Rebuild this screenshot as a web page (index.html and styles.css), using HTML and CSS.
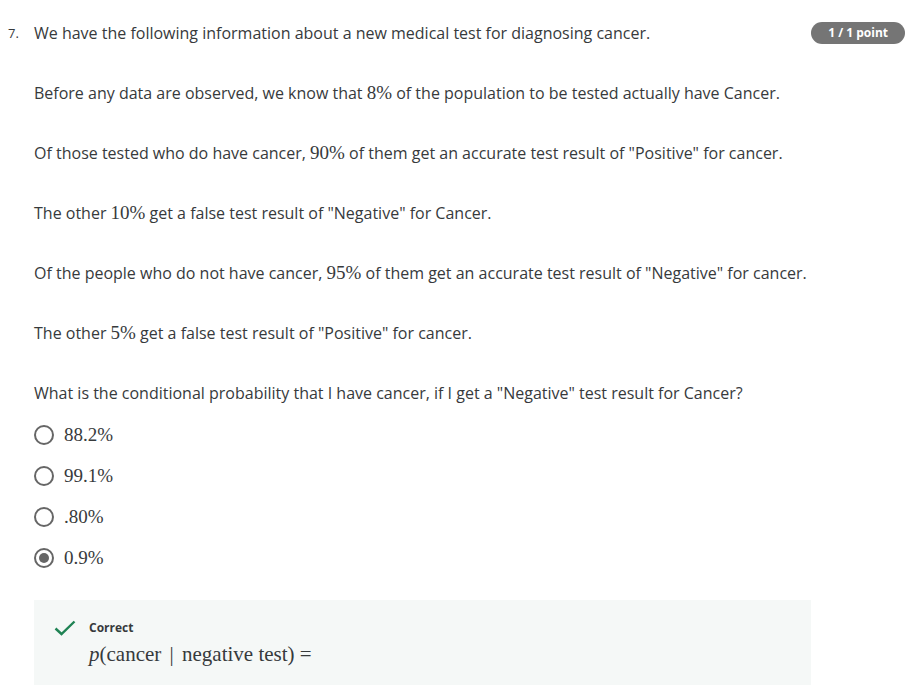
FILE: index.html
```html
<!DOCTYPE html>
<html>
<head>
<meta charset="utf-8">
<link rel="stylesheet" href="styles.css">
</head>
<body>
<div class="question">
  <div class="num">7.</div>
  <div class="content">
    <div class="head">
      <p class="first">We have the following information about a new medical test for diagnosing cancer.</p>
      <span class="badge">1 / 1 point</span>
    </div>
    <p>Before any data are observed, we know that <span class="m">8%</span> of the population to be tested actually have Cancer.</p>
    <p>Of those tested who do have cancer, <span class="m">90%</span> of them get an accurate test result of "Positive" for cancer.</p>
    <p>The other <span class="m">10%</span> get a false test result of "Negative" for Cancer.</p>
    <p>Of the people who do not have cancer, <span class="m">95%</span> of them get an accurate test result of "Negative" for cancer.</p>
    <p>The other <span class="m">5%</span> get a false test result of "Positive" for cancer.</p>
    <p class="last">What is the conditional probability that I have cancer, if I get a "Negative" test result for Cancer?</p>
    <ul class="options">
      <li><span class="radio"></span><span class="m">88.2%</span></li>
      <li><span class="radio"></span><span class="m">99.1%</span></li>
      <li><span class="radio"></span><span class="m">.80%</span></li>
      <li><span class="radio on"></span><span class="m">0.9%</span></li>
    </ul>
    <div class="feedback">
      <svg class="check" width="22" height="16" viewBox="0 0 22 16"><path d="M1.5 8.5 L7.5 14 L20.5 1.5" fill="none" stroke="#1f8354" stroke-width="2.4"/></svg>
      <div class="fb-body">
        <div class="fb-title">Correct</div>
        <div class="formula"><span class="it">p</span>(cancer <span class="bar">|</span> negative test) =</div>
      </div>
    </div>
  </div>
</div>
</body>
</html>
```

FILE: styles.css
```css
html, body {
  margin: 0;
  padding: 0;
  background: #fff;
}
body {
  font-family: "Open Sans", "Noto Sans", sans-serif;
  color: #373a3c;
  font-size: 16px;
}
.question {
  display: flex;
  padding: 21px 0 0 8px;
}
.num {
  width: 26px;
  font-size: 13px;
  line-height: 24px;
}
.content {
  flex: 1;
}
.head {
  display: flex;
  justify-content: space-between;
  align-items: flex-start;
  padding-right: 11px;
}
p {
  margin: 0 0 36px 0;
  line-height: 24px;
}
p.last { margin-bottom: 0; }
.badge {
  background: #757575;
  color: #fff;
  font-weight: 700;
  font-size: 12px;
  border-radius: 12px;
  padding: 0 17px;
  height: 22px;
  line-height: 22px;
  margin-top: 1px;
}
.m {
  font-family: "Liberation Serif", "DejaVu Serif", serif;
  font-size: 19px;
}
.options {
  list-style: none;
  margin: 9px 0 0 0;
  padding: 0;
}
.options li {
  display: flex;
  align-items: center;
  height: 41px;
}
.radio {
  width: 16px;
  height: 16px;
  border: 2px solid #666;
  border-radius: 50%;
  box-sizing: content-box;
  margin-right: 10px;
  display: flex;
  align-items: center;
  justify-content: center;
}
.radio.on::after {
  content: "";
  width: 10px;
  height: 10px;
  border-radius: 50%;
  background: #666;
}
.feedback {
  margin-top: 22px;
  width: 777px;
  background: #f5f8f7;
  display: flex;
  padding: 20px 0 20px 20px;
  box-sizing: border-box;
}
.check {
  margin: 0 13px 0 0;
}
.fb-title {
  font-size: 12px;
  font-weight: 700;
  line-height: 16px;
}
.formula {
  font-family: "Liberation Serif", "DejaVu Serif", serif;
  font-size: 21px;
  line-height: 28px;
  margin-top: 4px;
}
.formula .it { font-style: italic; }
.formula .bar { margin: 0 3px; }
```
